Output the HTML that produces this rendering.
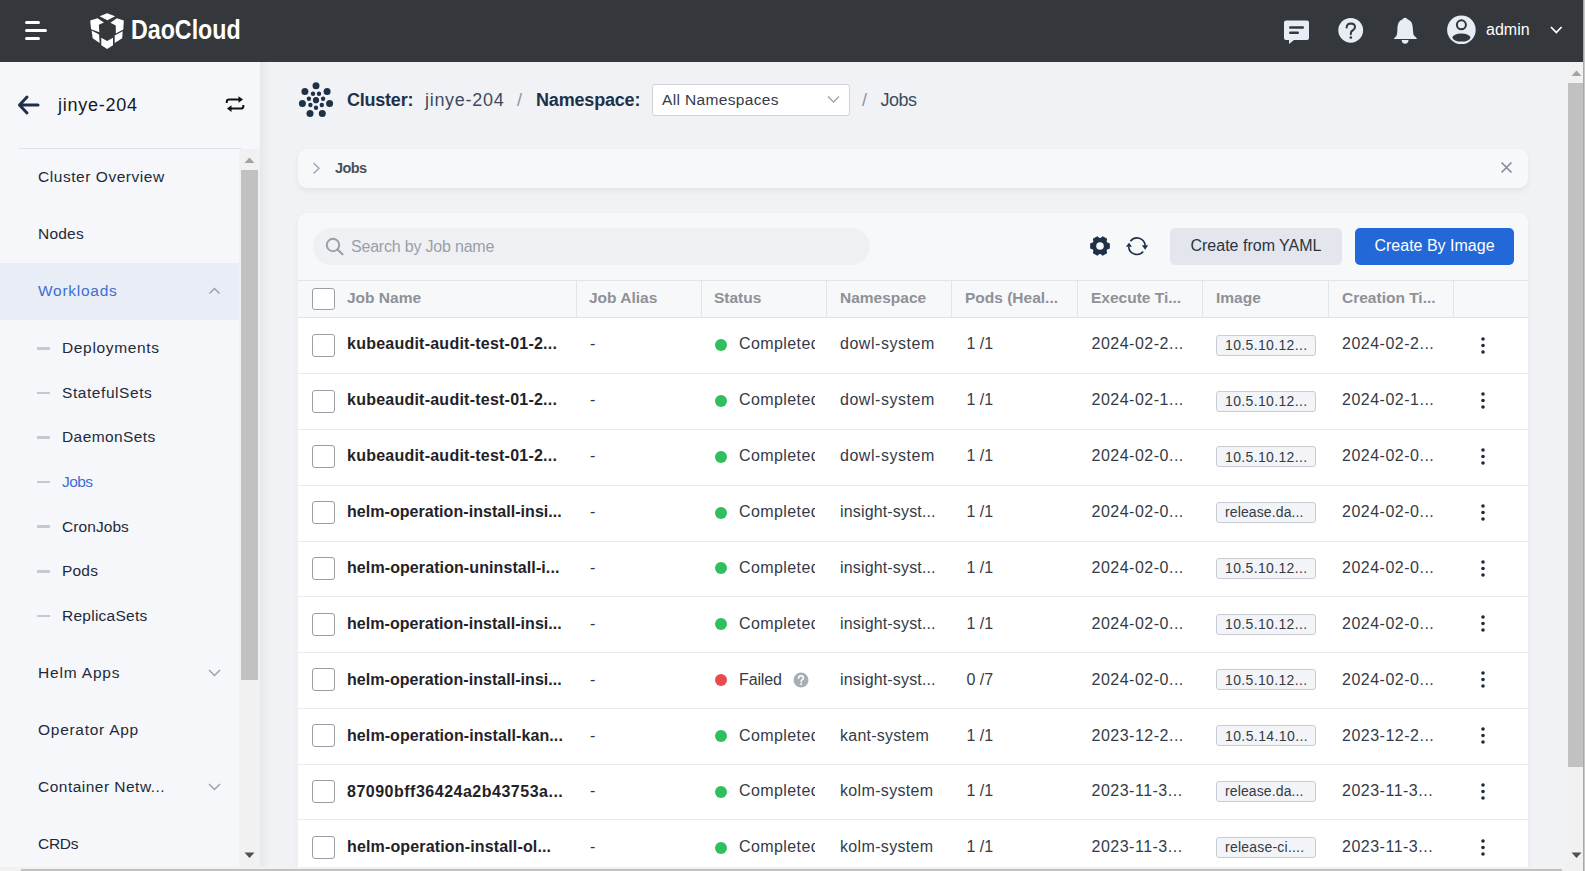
<!DOCTYPE html><html><head><meta charset="utf-8"><style>
*{box-sizing:border-box;margin:0;padding:0}
html,body{width:1585px;height:871px;overflow:hidden;font-family:"Liberation Sans",sans-serif;background:#f1f2f6;color:#2b2f36}
.a{position:absolute}
.t{position:absolute;white-space:nowrap;line-height:20px}
svg{position:absolute;overflow:visible}
</style></head><body>
<div class="a" style="left:0;top:0;width:1583px;height:62px;background:#34373b"></div>
<div class="a" style="left:25px;top:21px;width:15px;height:3px;background:#fff;border-radius:1.5px"></div>
<div class="a" style="left:25px;top:29px;width:22px;height:3px;background:#fff;border-radius:1.5px"></div>
<div class="a" style="left:25px;top:37px;width:15px;height:3px;background:#fff;border-radius:1.5px"></div>
<svg style="left:90px;top:12.5px" width="34" height="36" viewBox="0 0 34 36"><polygon points="9.6,3.2 17.1,0.2 25.2,3.2 17.4,7.3" fill="#fff"/><polygon points="0.2,7.5 7.5,5.2 13.9,9.4 8.9,11.8 9.3,19.3 1.1,16.3" fill="#fff"/><polygon points="1.6,17.6 9.1,21.5 9.6,30.0 2.7,25.2" fill="#fff"/><polygon points="11.3,24.7 17.1,27.9 23.0,24.7 23.0,32.2 17.1,35.9 11.3,32.2" fill="#fff"/><polygon points="24.7,22.5 32.7,18.2 32.2,25.2 24.7,30.0" fill="#fff"/><polygon points="20.4,9.7 26.8,5.2 33.8,7.5 33.3,16.6 25.8,20.4 25.8,12.4" fill="#fff"/></svg>
<div class="t" style="left:131px;top:15px;font-size:27px;line-height:30px;font-weight:bold;color:#fff;transform:scaleX(0.86);transform-origin:0 0">DaoCloud</div>
<svg style="left:1283px;top:19px" width="28" height="26" viewBox="0 0 28 26"><path d="M3,1.5 H24 Q26,1.5 26,3.5 V19 Q26,21 24,21 H11 L6,25 L6,21 H3 Q1,21 1,19 V3.5 Q1,1.5 3,1.5 Z" fill="#e8ecf5"/><rect x="6" y="7.3" width="15" height="2.4" rx="1.2" fill="#33363c"/><rect x="6" y="12.6" width="10" height="2.4" rx="1.2" fill="#33363c"/></svg>
<svg style="left:1338px;top:18px" width="26" height="26" viewBox="0 0 26 26"><circle cx="12.7" cy="12.3" r="12.4" fill="#e8ecf5"/><path d="M8.6,9.6 Q8.8,5.4 12.9,5.4 Q17,5.5 17,9 Q17,11.2 14.6,12.5 Q12.8,13.5 12.8,15.4 V16.3" fill="none" stroke="#33363c" stroke-width="2" stroke-linecap="round"/><circle cx="12.8" cy="19.6" r="1.3" fill="#33363c"/></svg>
<svg style="left:1393px;top:17px" width="26" height="28" viewBox="0 0 26 28"><path d="M12,0.8 Q14,0.8 14.8,2.6 Q19.5,4 19.8,10.5 Q20,17 21,18.5 L23.6,21 Q24.5,22 23.4,21.4 L23.5,21.6 Q24,22 23,22 H1.5 Q0.5,22 1,21.5 L3.3,19 Q4.4,17.5 4.4,10.5 Q4.8,4 9.4,2.6 Q10.2,0.8 12,0.8 Z" fill="#e8ecf5"/><path d="M8.6,23 H15.6 Q15.2,26.8 12.1,26.8 Q9,26.8 8.6,23 Z" fill="#e8ecf5"/></svg>
<svg style="left:1447px;top:15px" width="30" height="30" viewBox="0 0 30 30"><circle cx="14.4" cy="14.8" r="14.3" fill="#e8ecf5"/><circle cx="14.4" cy="9.8" r="4.5" fill="none" stroke="#33363c" stroke-width="2"/><ellipse cx="14.4" cy="22.6" rx="9" ry="4" fill="#33363c"/></svg>
<div class="t" style="left:1486px;top:20px;font-size:16px;color:#fff">admin</div>
<svg style="left:1550px;top:26px" width="13" height="8" viewBox="0 0 13 8"><path d="M1,1 L6.3,6.5 L11.6,1" fill="none" stroke="#fff" stroke-width="1.8"/></svg>
<div class="a" style="left:0;top:62px;width:260px;height:809px;background:#f5f7fb"></div>
<div class="a" style="left:260px;top:62px;width:10px;height:809px;background:linear-gradient(90deg,rgba(0,0,0,0.045),rgba(0,0,0,0))"></div>
<svg style="left:17px;top:95px" width="24" height="20" viewBox="0 0 24 20"><path d="M10,2 L2.5,10 L10,18 M3,10 H21" fill="none" stroke="#1e3148" stroke-width="3" stroke-linecap="round" stroke-linejoin="round"/></svg>
<div class="t" style="left:58px;top:94px;font-size:18px;line-height:22px;color:#14181f;letter-spacing:0.75px">jinye-204</div>
<svg style="left:225px;top:95px" width="21" height="19" viewBox="0 0 21 19"><path d="M1.8,8 V6.5 Q1.8,4.5 4,4.5 H14" fill="none" stroke="#111" stroke-width="2"/><path d="M13.5,1.3 L18,4.5 L13.5,7.8 Z" fill="#111"/><path d="M18.3,10 V11.5 Q18.3,13.6 16,13.6 H6" fill="none" stroke="#111" stroke-width="2"/><path d="M6.5,10.3 L2,13.6 L6.5,16.9 Z" fill="#111"/></svg>
<div class="a" style="left:19px;top:148px;width:222px;height:1px;background:#e0e4ea"></div>
<div class="a" style="left:0;top:263px;width:239px;height:57px;background:#e9edf5"></div>
<div class="t" style="left:38px;top:166.7px;font-size:15.5px;color:#1f2a38;letter-spacing:0.547px">Cluster Overview</div>
<div class="t" style="left:38px;top:223.7px;font-size:15.5px;color:#1f2a38;letter-spacing:0.225px">Nodes</div>
<div class="t" style="left:38px;top:280.7px;font-size:15.5px;color:#3b6fd4;letter-spacing:0.725px">Workloads</div>
<svg style="left:207.5px;top:287px" width="13" height="8" viewBox="0 0 13 8"><path d="M1.5,6.5 L6.5,1.5 L11.5,6.5" fill="none" stroke="#9aa3b0" stroke-width="1.5"/></svg>
<div class="a" style="left:37px;top:347.0px;width:13px;height:2.5px;background:#c3c9d3"></div>
<div class="t" style="left:62px;top:338.2px;font-size:15.5px;color:#1f2a38;letter-spacing:0.650px">Deployments</div>
<div class="a" style="left:37px;top:391.5px;width:13px;height:2.5px;background:#c3c9d3"></div>
<div class="t" style="left:62px;top:382.7px;font-size:15.5px;color:#1f2a38;letter-spacing:0.564px">StatefulSets</div>
<div class="a" style="left:37px;top:436.0px;width:13px;height:2.5px;background:#c3c9d3"></div>
<div class="t" style="left:62px;top:427.2px;font-size:15.5px;color:#1f2a38;letter-spacing:0.411px">DaemonSets</div>
<div class="a" style="left:37px;top:480.8px;width:13px;height:2.5px;background:#c3c9d3"></div>
<div class="t" style="left:62px;top:472.0px;font-size:15.5px;color:#3b6fd4;letter-spacing:-0.600px">Jobs</div>
<div class="a" style="left:37px;top:525.3px;width:13px;height:2.5px;background:#c3c9d3"></div>
<div class="t" style="left:62px;top:516.5px;font-size:15.5px;color:#1f2a38;letter-spacing:0.071px">CronJobs</div>
<div class="a" style="left:37px;top:570.0px;width:13px;height:2.5px;background:#c3c9d3"></div>
<div class="t" style="left:62px;top:561.2px;font-size:15.5px;color:#1f2a38;letter-spacing:0.200px">Pods</div>
<div class="a" style="left:37px;top:614.6px;width:13px;height:2.5px;background:#c3c9d3"></div>
<div class="t" style="left:62px;top:605.8px;font-size:15.5px;color:#1f2a38;letter-spacing:0.250px">ReplicaSets</div>
<div class="t" style="left:38px;top:662.7px;font-size:15.5px;color:#1f2a38;letter-spacing:0.825px">Helm Apps</div>
<div class="t" style="left:38px;top:719.7px;font-size:15.5px;color:#1f2a38;letter-spacing:0.727px">Operator App</div>
<div class="t" style="left:38px;top:776.7px;font-size:15.5px;color:#1f2a38;letter-spacing:0.481px">Container Netw...</div>
<div class="t" style="left:38px;top:833.7px;font-size:15.5px;color:#1f2a38;letter-spacing:-0.267px">CRDs</div>
<svg style="left:208px;top:669.0px" width="13" height="8" viewBox="0 0 13 8"><path d="M1,1 L6.5,6.5 L12,1" fill="none" stroke="#9aa3b0" stroke-width="1.5"/></svg>
<svg style="left:208px;top:783.0px" width="13" height="8" viewBox="0 0 13 8"><path d="M1,1 L6.5,6.5 L12,1" fill="none" stroke="#9aa3b0" stroke-width="1.5"/></svg>
<div class="a" style="left:239px;top:149px;width:21px;height:718px;background:#f1f1f1"></div>
<div class="a" style="left:241px;top:170px;width:17px;height:510px;background:#c1c1c1"></div>
<svg style="left:244px;top:157px" width="11" height="7" viewBox="0 0 11 7"><path d="M0.5,6 L5.5,0.5 L10.5,6 Z" fill="#a3a3a3"/></svg>
<svg style="left:244px;top:852px" width="11" height="7" viewBox="0 0 11 7"><path d="M0.5,0.5 L5.5,6 L10.5,0.5 Z" fill="#505050"/></svg>
<svg style="left:290px;top:78px" width="48" height="44" viewBox="0 0 48 44" fill="#1e3148"><circle cx="26.0" cy="7.8" r="3.5"/><circle cx="14.9" cy="13.4" r="3.5"/><circle cx="37.1" cy="13.4" r="3.5"/><circle cx="12.4" cy="25.5" r="3.5"/><circle cx="39.6" cy="25.5" r="3.5"/><circle cx="20.0" cy="35.4" r="3.5"/><circle cx="32.3" cy="35.4" r="3.5"/><circle cx="23.0" cy="15.7" r="2.2"/><circle cx="29.0" cy="15.7" r="2.2"/><circle cx="18.9" cy="20.7" r="2.2"/><circle cx="33.1" cy="20.7" r="2.2"/><circle cx="20.4" cy="27.0" r="2.2"/><circle cx="31.8" cy="27.0" r="2.2"/><circle cx="26.0" cy="29.8" r="2.2"/><circle cx="26" cy="22.2" r="3.1"/></svg>
<div class="t" style="left:347px;top:89.6px;font-size:18px;font-weight:bold;color:#1e3148;letter-spacing:-0.23px">Cluster:</div>
<div class="t" style="left:425px;top:89.6px;font-size:18px;color:#3d4b5c;letter-spacing:0.7px">jinye-204</div>
<div class="t" style="left:517px;top:89.6px;font-size:18px;color:#8a94a2">/</div>
<div class="t" style="left:536px;top:89.6px;font-size:18px;font-weight:bold;color:#1e3148;letter-spacing:-0.18px">Namespace:</div>
<div class="a" style="left:652px;top:84px;width:198px;height:32px;background:#fff;border:1px solid #cfd3da;border-radius:3px"></div>
<div class="t" style="left:662px;top:90px;font-size:15.5px;color:#343b47;letter-spacing:0.35px">All Namespaces</div>
<svg style="left:827px;top:95px" width="13" height="9" viewBox="0 0 13 9"><path d="M1,1.5 L6.5,7 L12,1.5" fill="none" stroke="#9aa3b0" stroke-width="1.4"/></svg>
<div class="t" style="left:862px;top:89.6px;font-size:18px;color:#8a94a2">/</div>
<div class="t" style="left:880.5px;top:89.6px;font-size:18px;color:#3d4b5c;letter-spacing:-0.5px">Jobs</div>
<div class="a" style="left:298px;top:149px;width:1230px;height:39px;background:#f7f8fa;border-radius:9px;box-shadow:0 3px 6px rgba(0,0,0,0.06)"></div>
<svg style="left:312px;top:162px" width="9" height="13" viewBox="0 0 9 13"><path d="M1.5,1 L7,6.3 L1.5,11.6" fill="none" stroke="#9aa5b5" stroke-width="1.4"/></svg>
<div class="t" style="left:335px;top:158px;font-size:14.5px;font-weight:bold;color:#4a505a;letter-spacing:-0.6px">Jobs</div>
<svg style="left:1500px;top:161px" width="13" height="13" viewBox="0 0 13 13"><path d="M1.5,1.5 L11.5,11.5 M11.5,1.5 L1.5,11.5" fill="none" stroke="#848e9c" stroke-width="1.7"/></svg>
<div class="a" style="left:298px;top:213px;width:1230px;height:680px;background:#f7f8fa;border-radius:9px;box-shadow:0 2px 6px rgba(0,0,0,0.04)"></div>
<div class="a" style="left:313px;top:228px;width:557px;height:37px;background:#eef0f4;border-radius:18.5px"></div>
<svg style="left:325px;top:237px" width="20" height="19" viewBox="0 0 20 19"><circle cx="8" cy="8" r="6.2" fill="none" stroke="#9aa0a8" stroke-width="2"/><path d="M12.5,12.5 L17.5,17.3" stroke="#9aa0a8" stroke-width="2.2" stroke-linecap="round"/></svg>
<div class="t" style="left:351px;top:236.5px;font-size:16px;color:#9a9fa6;letter-spacing:-0.2px">Search by Job name</div>
<svg style="left:1090px;top:236.4px" width="20" height="20" viewBox="0 0 20 20"><path fill="#1e3148" stroke="#1e3148" stroke-width="1.3" stroke-linejoin="round" d="M16.24,6.40 L17.05,7.15 L19.16,7.89 L19.16,12.11 L17.05,12.85 L16.24,13.60 L15.99,14.68 L16.41,16.87 L12.75,18.99 L11.06,17.53 L10.00,17.20 L8.94,17.53 L7.25,18.99 L3.59,16.87 L4.01,14.68 L3.76,13.60 L2.95,12.85 L0.84,12.11 L0.84,7.89 L2.95,7.15 L3.76,6.40 L4.01,5.32 L3.59,3.13 L7.25,1.01 L8.94,2.47 L10.00,2.80 L11.06,2.47 L12.75,1.01 L16.41,3.13 L15.99,5.32 Z"/><circle cx="10" cy="10" r="3.8" fill="#f7f8fa"/></svg>
<svg style="left:1125px;top:236px" width="24" height="22" viewBox="0 0 24 22"><path d="M5.44,5.15 A8.2,8.2 0 0 1 20.1,9.6" fill="none" stroke="#1e3148" stroke-width="1.6"/><path d="M18.18,15.47 A8.2,8.2 0 0 1 3.7,10.6" fill="none" stroke="#1e3148" stroke-width="1.6"/><path d="M16.9,9.3 L23.1,9.3 L20.1,13.7 Z" fill="#1e3148"/><path d="M0.9,10.8 L7.0,10.8 L4.0,6.8 Z" fill="#1e3148"/></svg>
<div class="a" style="left:1170px;top:228px;width:172px;height:37px;background:#e3e6ed;border-radius:5px"></div>
<div class="t" style="left:1170px;top:235.6px;width:172px;text-align:center;font-size:16px;color:#2b3440">Create from YAML</div>
<div class="a" style="left:1355px;top:228px;width:159px;height:37px;background:#2268d9;border-radius:5px"></div>
<div class="t" style="left:1355px;top:235.6px;width:159px;text-align:center;font-size:16px;color:#fff">Create By Image</div>
<div class="a" style="left:298px;top:280px;width:1230px;height:1px;background:#e1e4e9"></div>
<div class="a" style="left:298px;top:317px;width:1230px;height:1px;background:#e1e4e9"></div>
<div class="a" style="left:576px;top:281px;width:1px;height:36px;background:#e1e4e9"></div>
<div class="a" style="left:701px;top:281px;width:1px;height:36px;background:#e1e4e9"></div>
<div class="a" style="left:826px;top:281px;width:1px;height:36px;background:#e1e4e9"></div>
<div class="a" style="left:951px;top:281px;width:1px;height:36px;background:#e1e4e9"></div>
<div class="a" style="left:1077px;top:281px;width:1px;height:36px;background:#e1e4e9"></div>
<div class="a" style="left:1202px;top:281px;width:1px;height:36px;background:#e1e4e9"></div>
<div class="a" style="left:1328px;top:281px;width:1px;height:36px;background:#e1e4e9"></div>
<div class="a" style="left:1453px;top:281px;width:1px;height:36px;background:#e1e4e9"></div>
<div class="t" style="left:347px;top:288px;font-size:15.5px;font-weight:bold;color:#8e9196">Job Name</div>
<div class="t" style="left:589px;top:288px;font-size:15.5px;font-weight:bold;color:#8e9196">Job Alias</div>
<div class="t" style="left:714px;top:288px;font-size:15.5px;font-weight:bold;color:#8e9196">Status</div>
<div class="t" style="left:840px;top:288px;font-size:15.5px;font-weight:bold;color:#8e9196">Namespace</div>
<div class="t" style="left:965px;top:288px;font-size:15.5px;font-weight:bold;color:#8e9196">Pods (Heal...</div>
<div class="t" style="left:1091px;top:288px;font-size:15.5px;font-weight:bold;color:#8e9196">Execute Ti...</div>
<div class="t" style="left:1216px;top:288px;font-size:15.5px;font-weight:bold;color:#8e9196">Image</div>
<div class="t" style="left:1342px;top:288px;font-size:15.5px;font-weight:bold;color:#8e9196">Creation Ti...</div>
<div class="a" style="left:312px;top:288px;width:23px;height:22px;background:#fff;border:1px solid #9a9fa6;border-radius:3px"></div>
<div class="a" style="left:298px;top:318px;width:1230px;height:560px;background:#fff"></div>
<div class="a" style="left:312px;top:333.79px;width:23px;height:23px;background:#fff;border:1px solid #9a9fa6;border-radius:3px"></div>
<div class="t" style="left:347px;top:334.39px;font-size:16px;font-weight:bold;color:#1f2329;letter-spacing:0.235px">kubeaudit-audit-test-01-2...</div>
<div class="t" style="left:590px;top:334.29px;font-size:16px;color:#2b3440">-</div>
<div class="a" style="left:715.3px;top:338.89px;width:12px;height:12px;border-radius:50%;background:#2fbf5f"></div>
<div class="t" style="left:739px;top:334.29px;width:76px;overflow:hidden;font-size:16px;color:#343b47;letter-spacing:0.4px">Completed</div>
<div class="t" style="left:840px;top:334.29px;font-size:16px;color:#343b47;letter-spacing:0.530px">dowl-system</div>
<div class="t" style="left:966.5px;top:334.29px;font-size:16px;color:#343b47;letter-spacing:0px">1 /1</div>
<div class="t" style="left:1091.5px;top:334.29px;font-size:16px;color:#343b47;letter-spacing:0.5px">2024-02-2...</div>
<div class="a" style="left:1216px;top:334.79px;width:100px;height:21px;background:#f2f4f7;border:1px solid #c8ccd3;border-radius:3px"></div>
<div class="t" style="left:1225px;top:335.09px;font-size:14px;color:#343b47;letter-spacing:0.350px">10.5.10.12...</div>
<div class="t" style="left:1342px;top:334.29px;font-size:16px;color:#343b47;letter-spacing:0.5px">2024-02-2...</div>
<svg style="left:1479.5px;top:336.59px" width="6" height="18" viewBox="0 0 6 18" fill="#1e2a38"><circle cx="3" cy="2" r="1.8"/><circle cx="3" cy="8.5" r="1.8"/><circle cx="3" cy="15" r="1.8"/></svg>
<div class="a" style="left:298px;top:373.18px;width:1230px;height:1px;background:#e8eaee"></div>
<div class="a" style="left:312px;top:389.57px;width:23px;height:23px;background:#fff;border:1px solid #9a9fa6;border-radius:3px"></div>
<div class="t" style="left:347px;top:390.28px;font-size:16px;font-weight:bold;color:#1f2329;letter-spacing:0.235px">kubeaudit-audit-test-01-2...</div>
<div class="t" style="left:590px;top:390.18px;font-size:16px;color:#2b3440">-</div>
<div class="a" style="left:715.3px;top:394.78px;width:12px;height:12px;border-radius:50%;background:#2fbf5f"></div>
<div class="t" style="left:739px;top:390.18px;width:76px;overflow:hidden;font-size:16px;color:#343b47;letter-spacing:0.4px">Completed</div>
<div class="t" style="left:840px;top:390.18px;font-size:16px;color:#343b47;letter-spacing:0.530px">dowl-system</div>
<div class="t" style="left:966.5px;top:390.18px;font-size:16px;color:#343b47;letter-spacing:0px">1 /1</div>
<div class="t" style="left:1091.5px;top:390.18px;font-size:16px;color:#343b47;letter-spacing:0.5px">2024-02-1...</div>
<div class="a" style="left:1216px;top:390.57px;width:100px;height:21px;background:#f2f4f7;border:1px solid #c8ccd3;border-radius:3px"></div>
<div class="t" style="left:1225px;top:390.87px;font-size:14px;color:#343b47;letter-spacing:0.350px">10.5.10.12...</div>
<div class="t" style="left:1342px;top:390.18px;font-size:16px;color:#343b47;letter-spacing:0.5px">2024-02-1...</div>
<svg style="left:1479.5px;top:392.37px" width="6" height="18" viewBox="0 0 6 18" fill="#1e2a38"><circle cx="3" cy="2" r="1.8"/><circle cx="3" cy="8.5" r="1.8"/><circle cx="3" cy="15" r="1.8"/></svg>
<div class="a" style="left:298px;top:428.96px;width:1230px;height:1px;background:#e8eaee"></div>
<div class="a" style="left:312px;top:445.35px;width:23px;height:23px;background:#fff;border:1px solid #9a9fa6;border-radius:3px"></div>
<div class="t" style="left:347px;top:446.17px;font-size:16px;font-weight:bold;color:#1f2329;letter-spacing:0.235px">kubeaudit-audit-test-01-2...</div>
<div class="t" style="left:590px;top:446.07px;font-size:16px;color:#2b3440">-</div>
<div class="a" style="left:715.3px;top:450.67px;width:12px;height:12px;border-radius:50%;background:#2fbf5f"></div>
<div class="t" style="left:739px;top:446.07px;width:76px;overflow:hidden;font-size:16px;color:#343b47;letter-spacing:0.4px">Completed</div>
<div class="t" style="left:840px;top:446.07px;font-size:16px;color:#343b47;letter-spacing:0.530px">dowl-system</div>
<div class="t" style="left:966.5px;top:446.07px;font-size:16px;color:#343b47;letter-spacing:0px">1 /1</div>
<div class="t" style="left:1091.5px;top:446.07px;font-size:16px;color:#343b47;letter-spacing:0.5px">2024-02-0...</div>
<div class="a" style="left:1216px;top:446.35px;width:100px;height:21px;background:#f2f4f7;border:1px solid #c8ccd3;border-radius:3px"></div>
<div class="t" style="left:1225px;top:446.65px;font-size:14px;color:#343b47;letter-spacing:0.350px">10.5.10.12...</div>
<div class="t" style="left:1342px;top:446.07px;font-size:16px;color:#343b47;letter-spacing:0.5px">2024-02-0...</div>
<svg style="left:1479.5px;top:448.15px" width="6" height="18" viewBox="0 0 6 18" fill="#1e2a38"><circle cx="3" cy="2" r="1.8"/><circle cx="3" cy="8.5" r="1.8"/><circle cx="3" cy="15" r="1.8"/></svg>
<div class="a" style="left:298px;top:484.74px;width:1230px;height:1px;background:#e8eaee"></div>
<div class="a" style="left:312px;top:501.13px;width:23px;height:23px;background:#fff;border:1px solid #9a9fa6;border-radius:3px"></div>
<div class="t" style="left:347px;top:502.06px;font-size:16px;font-weight:bold;color:#1f2329;letter-spacing:0.050px">helm-operation-install-insi...</div>
<div class="t" style="left:590px;top:501.96px;font-size:16px;color:#2b3440">-</div>
<div class="a" style="left:715.3px;top:506.56px;width:12px;height:12px;border-radius:50%;background:#2fbf5f"></div>
<div class="t" style="left:739px;top:501.96px;width:76px;overflow:hidden;font-size:16px;color:#343b47;letter-spacing:0.4px">Completed</div>
<div class="t" style="left:840px;top:501.96px;font-size:16px;color:#343b47;letter-spacing:0.157px">insight-syst...</div>
<div class="t" style="left:966.5px;top:501.96px;font-size:16px;color:#343b47;letter-spacing:0px">1 /1</div>
<div class="t" style="left:1091.5px;top:501.96px;font-size:16px;color:#343b47;letter-spacing:0.5px">2024-02-0...</div>
<div class="a" style="left:1216px;top:502.13px;width:100px;height:21px;background:#f2f4f7;border:1px solid #c8ccd3;border-radius:3px"></div>
<div class="t" style="left:1225px;top:502.43px;font-size:14px;color:#343b47;letter-spacing:0.120px">release.da...</div>
<div class="t" style="left:1342px;top:501.96px;font-size:16px;color:#343b47;letter-spacing:0.5px">2024-02-0...</div>
<svg style="left:1479.5px;top:503.93px" width="6" height="18" viewBox="0 0 6 18" fill="#1e2a38"><circle cx="3" cy="2" r="1.8"/><circle cx="3" cy="8.5" r="1.8"/><circle cx="3" cy="15" r="1.8"/></svg>
<div class="a" style="left:298px;top:540.52px;width:1230px;height:1px;background:#e8eaee"></div>
<div class="a" style="left:312px;top:556.91px;width:23px;height:23px;background:#fff;border:1px solid #9a9fa6;border-radius:3px"></div>
<div class="t" style="left:347px;top:557.95px;font-size:16px;font-weight:bold;color:#1f2329;letter-spacing:0.093px">helm-operation-uninstall-i...</div>
<div class="t" style="left:590px;top:557.85px;font-size:16px;color:#2b3440">-</div>
<div class="a" style="left:715.3px;top:562.45px;width:12px;height:12px;border-radius:50%;background:#2fbf5f"></div>
<div class="t" style="left:739px;top:557.85px;width:76px;overflow:hidden;font-size:16px;color:#343b47;letter-spacing:0.4px">Completed</div>
<div class="t" style="left:840px;top:557.85px;font-size:16px;color:#343b47;letter-spacing:0.157px">insight-syst...</div>
<div class="t" style="left:966.5px;top:557.85px;font-size:16px;color:#343b47;letter-spacing:0px">1 /1</div>
<div class="t" style="left:1091.5px;top:557.85px;font-size:16px;color:#343b47;letter-spacing:0.5px">2024-02-0...</div>
<div class="a" style="left:1216px;top:557.91px;width:100px;height:21px;background:#f2f4f7;border:1px solid #c8ccd3;border-radius:3px"></div>
<div class="t" style="left:1225px;top:558.21px;font-size:14px;color:#343b47;letter-spacing:0.350px">10.5.10.12...</div>
<div class="t" style="left:1342px;top:557.85px;font-size:16px;color:#343b47;letter-spacing:0.5px">2024-02-0...</div>
<svg style="left:1479.5px;top:559.71px" width="6" height="18" viewBox="0 0 6 18" fill="#1e2a38"><circle cx="3" cy="2" r="1.8"/><circle cx="3" cy="8.5" r="1.8"/><circle cx="3" cy="15" r="1.8"/></svg>
<div class="a" style="left:298px;top:596.30px;width:1230px;height:1px;background:#e8eaee"></div>
<div class="a" style="left:312px;top:612.69px;width:23px;height:23px;background:#fff;border:1px solid #9a9fa6;border-radius:3px"></div>
<div class="t" style="left:347px;top:613.84px;font-size:16px;font-weight:bold;color:#1f2329;letter-spacing:0.050px">helm-operation-install-insi...</div>
<div class="t" style="left:590px;top:613.74px;font-size:16px;color:#2b3440">-</div>
<div class="a" style="left:715.3px;top:618.34px;width:12px;height:12px;border-radius:50%;background:#2fbf5f"></div>
<div class="t" style="left:739px;top:613.74px;width:76px;overflow:hidden;font-size:16px;color:#343b47;letter-spacing:0.4px">Completed</div>
<div class="t" style="left:840px;top:613.74px;font-size:16px;color:#343b47;letter-spacing:0.157px">insight-syst...</div>
<div class="t" style="left:966.5px;top:613.74px;font-size:16px;color:#343b47;letter-spacing:0px">1 /1</div>
<div class="t" style="left:1091.5px;top:613.74px;font-size:16px;color:#343b47;letter-spacing:0.5px">2024-02-0...</div>
<div class="a" style="left:1216px;top:613.69px;width:100px;height:21px;background:#f2f4f7;border:1px solid #c8ccd3;border-radius:3px"></div>
<div class="t" style="left:1225px;top:613.99px;font-size:14px;color:#343b47;letter-spacing:0.350px">10.5.10.12...</div>
<div class="t" style="left:1342px;top:613.74px;font-size:16px;color:#343b47;letter-spacing:0.5px">2024-02-0...</div>
<svg style="left:1479.5px;top:615.49px" width="6" height="18" viewBox="0 0 6 18" fill="#1e2a38"><circle cx="3" cy="2" r="1.8"/><circle cx="3" cy="8.5" r="1.8"/><circle cx="3" cy="15" r="1.8"/></svg>
<div class="a" style="left:298px;top:652.08px;width:1230px;height:1px;background:#e8eaee"></div>
<div class="a" style="left:312px;top:668.47px;width:23px;height:23px;background:#fff;border:1px solid #9a9fa6;border-radius:3px"></div>
<div class="t" style="left:347px;top:669.73px;font-size:16px;font-weight:bold;color:#1f2329;letter-spacing:0.050px">helm-operation-install-insi...</div>
<div class="t" style="left:590px;top:669.63px;font-size:16px;color:#2b3440">-</div>
<div class="a" style="left:715.3px;top:674.23px;width:12px;height:12px;border-radius:50%;background:#e84b4b"></div>
<div class="t" style="left:739px;top:669.63px;font-size:16px;color:#343b47;letter-spacing:-0.12px">Failed</div>
<svg style="left:793px;top:672.13px" width="16" height="16" viewBox="0 0 16 16"><circle cx="8" cy="8" r="7.5" fill="#a9adb4"/><path d="M5.6,6.3 Q5.7,3.8 8.1,3.8 Q10.4,3.9 10.4,5.9 Q10.4,7.1 9,7.9 Q8.1,8.5 8.1,9.6" fill="none" stroke="#fff" stroke-width="1.6" stroke-linecap="round"/><circle cx="8.1" cy="12" r="1" fill="#fff"/></svg>
<div class="t" style="left:840px;top:669.63px;font-size:16px;color:#343b47;letter-spacing:0.157px">insight-syst...</div>
<div class="t" style="left:966.5px;top:669.63px;font-size:16px;color:#343b47;letter-spacing:0px">0 /7</div>
<div class="t" style="left:1091.5px;top:669.63px;font-size:16px;color:#343b47;letter-spacing:0.5px">2024-02-0...</div>
<div class="a" style="left:1216px;top:669.47px;width:100px;height:21px;background:#f2f4f7;border:1px solid #c8ccd3;border-radius:3px"></div>
<div class="t" style="left:1225px;top:669.77px;font-size:14px;color:#343b47;letter-spacing:0.350px">10.5.10.12...</div>
<div class="t" style="left:1342px;top:669.63px;font-size:16px;color:#343b47;letter-spacing:0.5px">2024-02-0...</div>
<svg style="left:1479.5px;top:671.27px" width="6" height="18" viewBox="0 0 6 18" fill="#1e2a38"><circle cx="3" cy="2" r="1.8"/><circle cx="3" cy="8.5" r="1.8"/><circle cx="3" cy="15" r="1.8"/></svg>
<div class="a" style="left:298px;top:707.86px;width:1230px;height:1px;background:#e8eaee"></div>
<div class="a" style="left:312px;top:724.25px;width:23px;height:23px;background:#fff;border:1px solid #9a9fa6;border-radius:3px"></div>
<div class="t" style="left:347px;top:725.62px;font-size:16px;font-weight:bold;color:#1f2329;letter-spacing:0.089px">helm-operation-install-kan...</div>
<div class="t" style="left:590px;top:725.52px;font-size:16px;color:#2b3440">-</div>
<div class="a" style="left:715.3px;top:730.12px;width:12px;height:12px;border-radius:50%;background:#2fbf5f"></div>
<div class="t" style="left:739px;top:725.52px;width:76px;overflow:hidden;font-size:16px;color:#343b47;letter-spacing:0.4px">Completed</div>
<div class="t" style="left:840px;top:725.52px;font-size:16px;color:#343b47;letter-spacing:0.250px">kant-system</div>
<div class="t" style="left:966.5px;top:725.52px;font-size:16px;color:#343b47;letter-spacing:0px">1 /1</div>
<div class="t" style="left:1091.5px;top:725.52px;font-size:16px;color:#343b47;letter-spacing:0.5px">2023-12-2...</div>
<div class="a" style="left:1216px;top:725.25px;width:100px;height:21px;background:#f2f4f7;border:1px solid #c8ccd3;border-radius:3px"></div>
<div class="t" style="left:1225px;top:725.55px;font-size:14px;color:#343b47;letter-spacing:0.400px">10.5.14.10...</div>
<div class="t" style="left:1342px;top:725.52px;font-size:16px;color:#343b47;letter-spacing:0.5px">2023-12-2...</div>
<svg style="left:1479.5px;top:727.05px" width="6" height="18" viewBox="0 0 6 18" fill="#1e2a38"><circle cx="3" cy="2" r="1.8"/><circle cx="3" cy="8.5" r="1.8"/><circle cx="3" cy="15" r="1.8"/></svg>
<div class="a" style="left:298px;top:763.64px;width:1230px;height:1px;background:#e8eaee"></div>
<div class="a" style="left:312px;top:780.03px;width:23px;height:23px;background:#fff;border:1px solid #9a9fa6;border-radius:3px"></div>
<div class="t" style="left:347px;top:781.51px;font-size:16px;font-weight:bold;color:#1f2329;letter-spacing:0.504px">87090bff36424a2b43753a...</div>
<div class="t" style="left:590px;top:781.41px;font-size:16px;color:#2b3440">-</div>
<div class="a" style="left:715.3px;top:786.01px;width:12px;height:12px;border-radius:50%;background:#2fbf5f"></div>
<div class="t" style="left:739px;top:781.41px;width:76px;overflow:hidden;font-size:16px;color:#343b47;letter-spacing:0.4px">Completed</div>
<div class="t" style="left:840px;top:781.41px;font-size:16px;color:#343b47;letter-spacing:0.340px">kolm-system</div>
<div class="t" style="left:966.5px;top:781.41px;font-size:16px;color:#343b47;letter-spacing:0px">1 /1</div>
<div class="t" style="left:1091.5px;top:781.41px;font-size:16px;color:#343b47;letter-spacing:0.5px">2023-11-3...</div>
<div class="a" style="left:1216px;top:781.03px;width:100px;height:21px;background:#f2f4f7;border:1px solid #c8ccd3;border-radius:3px"></div>
<div class="t" style="left:1225px;top:781.33px;font-size:14px;color:#343b47;letter-spacing:0.120px">release.da...</div>
<div class="t" style="left:1342px;top:781.41px;font-size:16px;color:#343b47;letter-spacing:0.5px">2023-11-3...</div>
<svg style="left:1479.5px;top:782.83px" width="6" height="18" viewBox="0 0 6 18" fill="#1e2a38"><circle cx="3" cy="2" r="1.8"/><circle cx="3" cy="8.5" r="1.8"/><circle cx="3" cy="15" r="1.8"/></svg>
<div class="a" style="left:298px;top:819.42px;width:1230px;height:1px;background:#e8eaee"></div>
<div class="a" style="left:312px;top:835.81px;width:23px;height:23px;background:#fff;border:1px solid #9a9fa6;border-radius:3px"></div>
<div class="t" style="left:347px;top:837.40px;font-size:16px;font-weight:bold;color:#1f2329;letter-spacing:0.150px">helm-operation-install-ol...</div>
<div class="t" style="left:590px;top:837.30px;font-size:16px;color:#2b3440">-</div>
<div class="a" style="left:715.3px;top:841.90px;width:12px;height:12px;border-radius:50%;background:#2fbf5f"></div>
<div class="t" style="left:739px;top:837.30px;width:76px;overflow:hidden;font-size:16px;color:#343b47;letter-spacing:0.4px">Completed</div>
<div class="t" style="left:840px;top:837.30px;font-size:16px;color:#343b47;letter-spacing:0.340px">kolm-system</div>
<div class="t" style="left:966.5px;top:837.30px;font-size:16px;color:#343b47;letter-spacing:0px">1 /1</div>
<div class="t" style="left:1091.5px;top:837.30px;font-size:16px;color:#343b47;letter-spacing:0.5px">2023-11-3...</div>
<div class="a" style="left:1216px;top:836.81px;width:100px;height:21px;background:#f2f4f7;border:1px solid #c8ccd3;border-radius:3px"></div>
<div class="t" style="left:1225px;top:837.11px;font-size:14px;color:#343b47;letter-spacing:0.220px">release-ci....</div>
<div class="t" style="left:1342px;top:837.30px;font-size:16px;color:#343b47;letter-spacing:0.5px">2023-11-3...</div>
<svg style="left:1479.5px;top:838.61px" width="6" height="18" viewBox="0 0 6 18" fill="#1e2a38"><circle cx="3" cy="2" r="1.8"/><circle cx="3" cy="8.5" r="1.8"/><circle cx="3" cy="15" r="1.8"/></svg>
<div class="a" style="left:1566px;top:62px;width:17px;height:809px;background:#f1f1f1"></div>
<div class="a" style="left:1568px;top:83px;width:15px;height:684px;background:#c1c1c1"></div>
<svg style="left:1571px;top:70px" width="11" height="7" viewBox="0 0 11 7"><path d="M0.5,6 L5.5,0.5 L10.5,6 Z" fill="#a3a3a3"/></svg>
<svg style="left:1571px;top:852px" width="11" height="7" viewBox="0 0 11 7"><path d="M0.5,0.5 L5.5,6 L10.5,0.5 Z" fill="#505050"/></svg>
<div class="a" style="left:1583px;top:0;width:1px;height:871px;background:#a8a8a8"></div>
<div class="a" style="left:1584px;top:0;width:1px;height:871px;background:#c8c8c8"></div>
<div class="a" style="left:0;top:867px;width:1566px;height:4px;background:#f1f1f1"></div>
<div class="a" style="left:21px;top:869px;width:1541px;height:2px;background:#c1c1c1"></div>
</body></html>
